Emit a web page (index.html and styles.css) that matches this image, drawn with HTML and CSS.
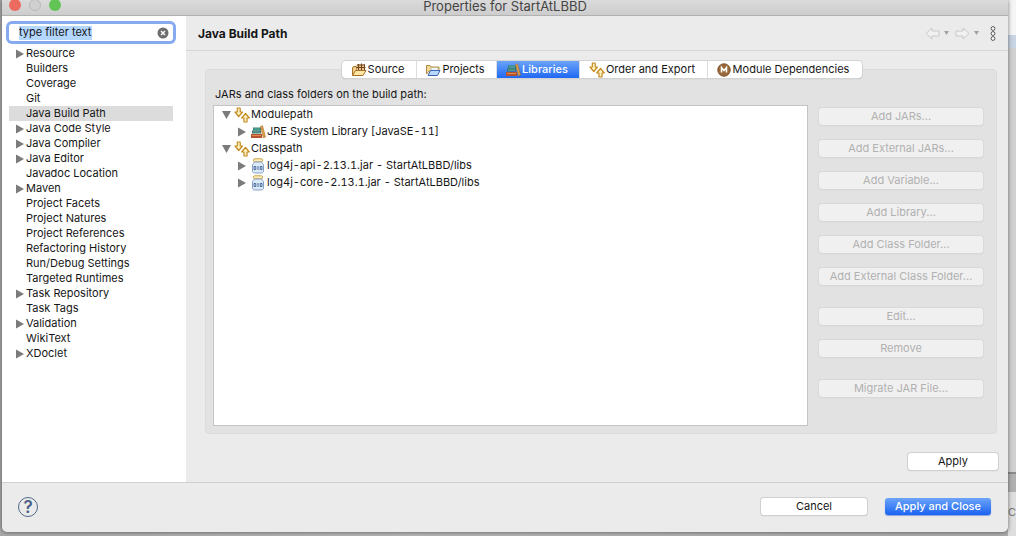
FILE: index.html
```html
<!DOCTYPE html>
<html lang="en">
<head>
<meta charset="utf-8">
<title>Properties for StartAtLBBD</title>
<link rel="stylesheet" href="styles.css">
</head>
<body>
<svg class="defs" aria-hidden="true">
  <symbol id="closed" viewBox="0 0 8 10"><path d="M0 .5l8 4.500-8 4.500z" fill="#7b7b7b"/></symbol>
  <symbol id="open" viewBox="0 0 9 8"><path d="M0 0h9L4.500 8z" fill="#7b7b7b"/></symbol>
  <symbol id="path" viewBox="0 0 16 16"><g fill="#fff3c4" stroke="#c58a20" stroke-width="1.200" stroke-linejoin="round"><path d="M3.300 1h2.900v4h2.300L4.750 9.500 1 5h2.300z"/><path d="M10 15h3v-4h2.300L11.500 6.500 7.700 11H10z"/></g></symbol>
  <symbol id="books" viewBox="0 0 16 16"><path d="M3 3.500h8v3H3z" fill="#2d8073"/><path d="M4 4.500h6v1H4z" fill="#68b7a4"/><path d="M2 6.500h9v3H2z" fill="#35706f"/><path d="M3 7.500h7v1H3z" fill="#6fb09a"/><path d="M1 10h11v4H1z" fill="#b5532d"/><path d="M2 11h9v1H2z" fill="#dc8a54"/><path d="M10.500 2.500l2-.8L15.500 13l-2.200.8z" fill="#dca34b" stroke="#a76826" stroke-width=".6"/></symbol>
  <symbol id="jar" viewBox="0 0 14 16"><rect x="2.500" y=".8" width="9" height="3" rx="1" fill="#ffeeb5" stroke="#c9a04c"/><path d="M3.500 4h7c.5 1.500 2 1.500 2 3v6c0 1-1 2-2 2h-7c-1 0-2-1-2-2V7c0-1.500 1.500-1.500 2-3z" fill="#dce9f8" stroke="#87a2c5"/><path d="M3 8.500h1.800v3H3zM7 8v4M9.200 8.500H11v3H9.200z" fill="none" stroke="#3b5d92" stroke-width=".9"/></symbol>
  <symbol id="source" viewBox="0 0 16 16"><path d="M1.500 13V6l1-1.500h3V13z" fill="#eed18a" stroke="#a77025"/><path d="M5.500 2.500h8.500v6H5.500z" fill="#e9c48c"/><path d="M5 5.500h9.500M6 3h8M7.500 2v7M10.500 1.500v7.500M13.500 2.500V9" stroke="#70451f" fill="none"/><path d="M1.500 13.500L4.500 8.500h10.500L12 13.500z" fill="#ffe6a5" stroke="#a77025" stroke-linejoin="round"/></symbol>
  <symbol id="projects" viewBox="0 0 16 16"><path d="M1.500 12V3.500H5l1 1.500h8v4H4z" fill="#f3da98" stroke="#b08a45"/><path d="M6 5.500h7V9H6z" fill="#eef5fb" stroke="#b0a46b" stroke-width=".6"/><path d="M3 13.500l2.500-5H15l-2.500 5z" fill="#b8d8ff" stroke="#3b68b5" stroke-linejoin="round"/></symbol>
</svg>
<div class="behind-row" aria-hidden="true"><span class="behind-text">Co</span></div>
<div class="window">
  <header class="titlebar"><div class="lights"><i class="red"></i><i class="gray"></i><i class="green"></i></div><h1>Properties for StartAtLBBD</h1></header>
  <div class="content">
    <aside class="sidebar">
      <div class="filter">
        <input type="text" value="type filter text" aria-label="Filter" size="12">
        <button type="button" aria-label="Clear"><svg viewBox="0 0 12 12"><circle cx="6" cy="6" r="5.500" fill="#6e6e6e"/><path d="M4 4l4 4M8 4l-4 4" stroke="#fff" stroke-width="1.400"/></svg></button>
      </div>
      <ul class="nav">
        <li><svg><use href="#closed"/></svg>Resource</li><li>Builders</li><li>Coverage</li><li>Git</li><li class="selected">Java Build Path</li>
        <li><svg><use href="#closed"/></svg>Java Code Style</li><li><svg><use href="#closed"/></svg>Java Compiler</li><li><svg><use href="#closed"/></svg>Java Editor</li><li>Javadoc Location</li>
        <li><svg><use href="#closed"/></svg>Maven</li><li>Project Facets</li><li>Project Natures</li><li>Project References</li><li>Refactoring History</li><li>Run/Debug Settings</li><li>Targeted Runtimes</li>
        <li><svg><use href="#closed"/></svg>Task Repository</li><li>Task Tags</li><li><svg><use href="#closed"/></svg>Validation</li><li>WikiText</li><li><svg><use href="#closed"/></svg>XDoclet</li>
      </ul>
    </aside>
    <main class="page">
      <div class="page-head"><h2>Java Build Path</h2>
        <div class="history">
          <button type="button" aria-label="Back"><svg class="arrow" viewBox="0 0 15 13"><path d="M1 6.500L7 1v3h7v5H7v3z" fill="#f1f1f1" stroke="#c8c8c8"/></svg></button><button type="button" aria-label="Back history"><svg class="drop" viewBox="0 0 5 4"><path d="M0 0h5L2.500 4z" fill="#a2a2a2"/></svg></button>
          <button type="button" aria-label="Forward"><svg class="arrow" viewBox="0 0 15 13"><path d="M14 6.500L8 1v3H1v5h7v3z" fill="#f1f1f1" stroke="#c8c8c8"/></svg></button><button type="button" aria-label="Forward history"><svg class="drop" viewBox="0 0 5 4"><path d="M0 0h5L2.500 4z" fill="#a2a2a2"/></svg></button>
          <button type="button" class="more" aria-label="Menu"><svg viewBox="0 0 6 15"><g fill="#fff" stroke="#555"><circle cx="3" cy="2.500" r="1.900"/><circle cx="3" cy="7.500" r="1.900"/><circle cx="3" cy="12.500" r="1.900"/></g></svg></button>
        </div>
      </div>
      <div class="page-body">
        <div class="tabs" role="tablist">
          <button type="button" role="tab"><svg><use href="#source"/></svg>Source</button>
          <button type="button" role="tab"><svg><use href="#projects"/></svg>Projects</button>
          <button type="button" role="tab" class="active" aria-selected="true"><svg><use href="#books"/></svg>Libraries</button>
          <button type="button" role="tab"><svg><use href="#path"/></svg>Order and Export</button>
          <button type="button" role="tab"><svg viewBox="0 0 16 16"><circle cx="8" cy="8" r="6.200" fill="#9a6a3c" stroke="#7c4d24"/><path d="M5.500 10.500v-5L8 8.500l2.500-3v5" fill="none" stroke="#fff" stroke-width="1.500"/></svg>Module Dependencies</button>
        </div>
        <section class="group">
          <p>JARs and class folders on the build path:</p>
          <div class="columns">
            <ul class="tree">
              <li><svg class="open"><use href="#open"/></svg><svg class="icon"><use href="#path"/></svg>Modulepath</li>
              <li class="child"><svg class="closed"><use href="#closed"/></svg><svg class="icon"><use href="#books"/></svg>JRE System Library [JavaSE-11]</li>
              <li><svg class="open"><use href="#open"/></svg><svg class="icon"><use href="#path"/></svg>Classpath</li>
              <li class="child"><svg class="closed"><use href="#closed"/></svg><svg class="icon"><use href="#jar"/></svg>log4j-api-2.13.1.jar - StartAtLBBD/libs</li>
              <li class="child"><svg class="closed"><use href="#closed"/></svg><svg class="icon"><use href="#jar"/></svg>log4j-core-2.13.1.jar - StartAtLBBD/libs</li>
            </ul>
            <div class="actions">
              <button class="btn" disabled>Add JARs...</button><button class="btn" disabled>Add External JARs...</button><button class="btn" disabled>Add Variable...</button><button class="btn" disabled>Add Library...</button><button class="btn" disabled>Add Class Folder...</button><button class="btn" disabled>Add External Class Folder...</button>
              <button class="btn spaced" disabled>Edit...</button><button class="btn" disabled>Remove</button><button class="btn spaced" disabled>Migrate JAR File...</button>
            </div>
          </div>
        </section>
        <div class="apply"><button class="btn" type="button">Apply</button></div>
      </div>
    </main>
  </div>
  <footer class="footer">
    <button type="button" class="help" aria-label="Help">?</button>
    <button type="button" class="btn cancel">Cancel</button><button type="button" class="btn primary">Apply and Close</button>
  </footer>
</div>
</body>
</html>
```
FILE: styles.css
```css
* { box-sizing: border-box; }
body { margin: 0; height: 100vh; padding: 0 8px 4px 2px; overflow: hidden; background: linear-gradient(90deg, #a9a9a9, #b5b5b5 40%, #a9a9a9); font: 11px/15px Inter, "Liberation Sans", sans-serif; color: #161616; }
button, input { font: inherit; color: inherit; }
button { border: 0; padding: 0; background: none; }
ul { list-style: none; margin: 0; padding: 0; }
h1, h2, p { margin: 0; }
svg { flex: none; display: block; }
.defs { position: absolute; width: 0; height: 0; }
.behind-row { position: absolute; top: 0; right: 0; bottom: 0; width: 8px; background: linear-gradient(#f5f5f5 35px, #c8d3e3 35px 48px, #d0d0d0 48px 472px, #8b8b8b 472px 474px, #b0b0b0 474px 492px, #dedede 492px); overflow: hidden; }
.behind-text { position: absolute; left: 0; bottom: 16px; color: #777; }
.window { position: relative; height: 100%; display: flex; flex-direction: column; background: #ebebeb; border-radius: 0 0 5px 5px; overflow: hidden; box-shadow: 0 0 4px #0008; }
.titlebar { position: relative; height: 16px; flex: none; background: linear-gradient(#dadada, #cdcdcd); border-bottom: 1px solid #b1b1b1; }
.titlebar h1 { font-size: 13px; font-weight: 400; line-height: 12px; text-align: center; color: #444; }
.lights { position: absolute; left: 7px; top: -1px; display: flex; gap: 8px; }
.lights i { width: 12px; height: 12px; border-radius: 50%; }
.red { background: #ed6a5e; }
.gray { background: #d0d0d0; border: 1px solid #b8b8b8; }
.green { background: #61c454; }
.content { flex: 1; min-height: 0; display: flex; }
.sidebar { width: 184px; flex: none; padding: 8px 13px 0 7px; background: #fff; }
.filter { display: flex; align-items: center; height: 17px; border-radius: 3px; box-shadow: 0 0 0 3px #86aaf0; margin: 0 0 5px; padding: 0 4px 0 10px; }
.filter input { border: 0; padding: 0; outline: 0; width: 73px; background: #b3d7ff; height: 14px; }
.filter button { margin-left: auto; }
.filter svg { width: 12px; height: 12px; }
.nav li { display: flex; align-items: center; height: 15px; padding-left: 17px; }
.nav svg { width: 8px; height: 10px; margin: 0 2px 0 -10px; }
.nav .selected { background: #dcdcdc; }
.page { flex: 1; min-width: 0; display: flex; flex-direction: column; }
.page-head { display: flex; align-items: center; justify-content: space-between; height: 35px; flex: none; padding: 0 12px; border-bottom: 1px solid #d7d7d7; }
.page-head h2 { font-size: 12px; font-weight: 700; }
.history { display: flex; align-items: center; gap: 4px; }
.arrow { width: 15px; height: 13px; }
.drop { width: 5px; height: 4px; margin-right: 2px; }
.more { margin-left: 5px; }
.more svg { width: 6px; height: 15px; }
.page-body { flex: 1; min-height: 0; display: flex; flex-direction: column; padding: 10px 10px 12px 19px; }
.tabs { position: relative; z-index: 1; align-self: center; display: grid; grid-template-columns: 75px 80px 83px 128px 154px; height: 17px; margin-bottom: -9px; background: #fff; border-radius: 4px; box-shadow: 0 0 0 1px #d3d3d3, 0 1px 1px #aaa; }
.tabs button { display: flex; align-items: center; justify-content: center; gap: 1px; padding-right: 2px; white-space: nowrap; border-right: 1px solid #ddd; }
.tabs button:last-child { border: 0; padding-right: 4px; }
.tabs svg { width: 16px; height: 16px; }
.tabs .active { color: #fff; font-weight: 500; background: linear-gradient(#6ba4f8, #2068f3); }
.group { flex: 1; min-height: 0; display: flex; flex-direction: column; margin-right: 1px; padding: 17px 13px 7px 7px; background: #e2e2e2; border: 1px solid #dbdbdb; border-radius: 4px; }
.group p { padding-left: 2px; margin-bottom: 3px; }
.columns { flex: 1; min-height: 0; display: flex; gap: 11px; }
.tree { flex: 1; background: #fff; border: 1px solid #c4c4c4; font-variant-numeric: tabular-nums; }
.tree li { display: flex; align-items: center; height: 17px; padding-left: 8px; }
.tree .child { padding-left: 24px; }
.tree .open { width: 9px; height: 8px; margin-right: 3px; }
.tree .closed { width: 8px; height: 10px; margin-right: 4px; }
.icon { width: 16px; height: 16px; margin-right: 1px; }
.actions { width: 164px; display: flex; flex-direction: column; gap: 15px; padding-top: 3px; }
.btn { height: 17px; line-height: 17px; text-align: center; background: #fff; border-radius: 3px; box-shadow: 0 0 0 1px #d0d0d0, 0 1px 1px #aaa; }
.btn:disabled { color: #b1b1b1; background: #f0f0f0; box-shadow: 0 0 0 1px #d9d9d9, 0 1px 1px #c5c5c5; }
.spaced { margin-top: 8px; }
.apply { display: flex; justify-content: flex-end; padding-top: 19px; }
.apply .btn { width: 90px; }
.footer { display: flex; align-items: center; height: 50px; flex: none; padding: 0 17px 2px 16px; border-top: 1px solid #cfcfcf; }
.help { width: 20px; height: 20px; border: 1px solid #52678a; border-radius: 50%; color: #4a6188; font-size: 17px; font-weight: 600; line-height: 18px; }
.cancel { width: 106px; margin-left: auto; }
.primary { width: 106px; margin-left: 18px; color: #fff; font-weight: 500; background: linear-gradient(#6ba4f8, #1c63f2); box-shadow: 0 1px 1px #8aa6d8; }
```
